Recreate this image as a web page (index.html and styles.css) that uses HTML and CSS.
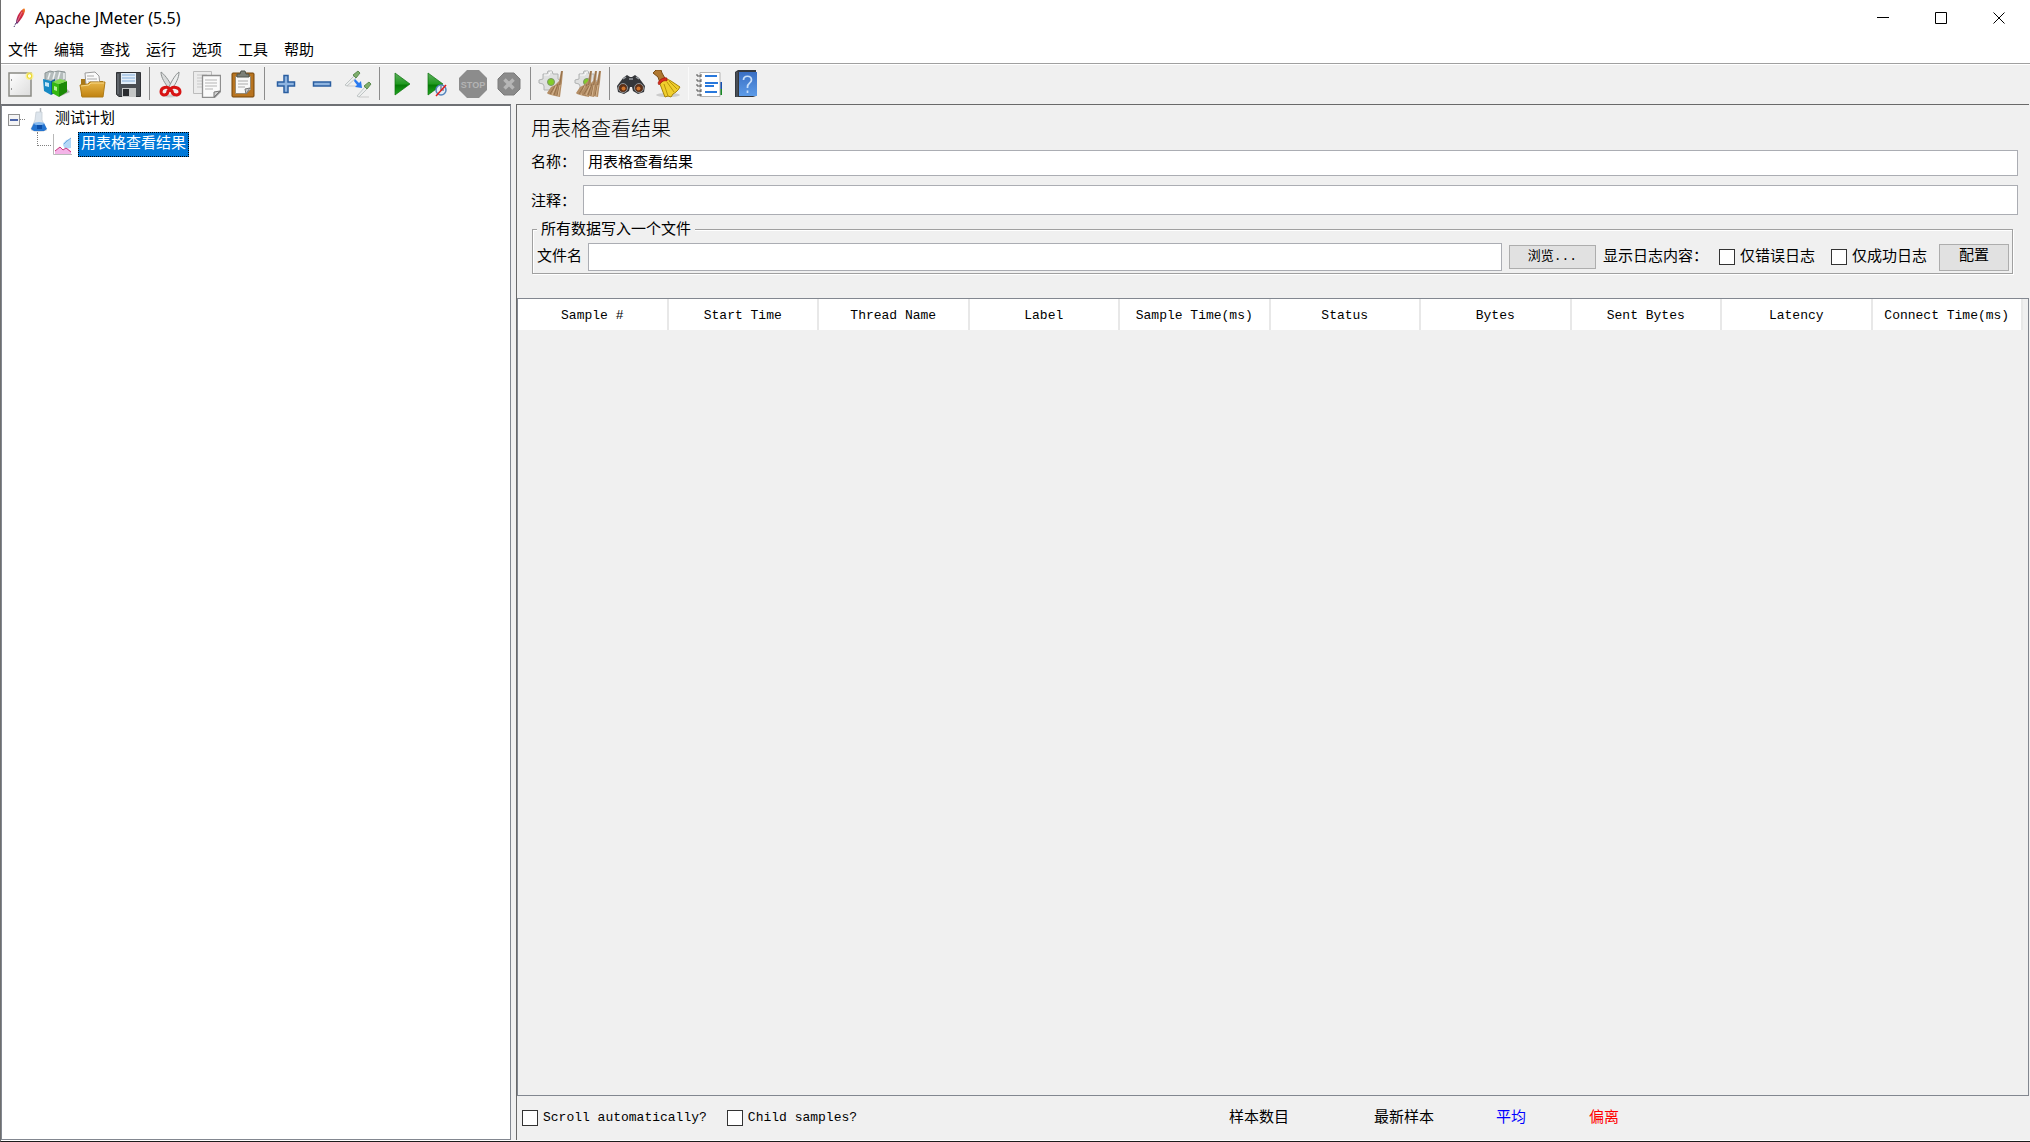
FILE: index.html
```html
<!DOCTYPE html>
<html lang="zh-CN">
<head>
<meta charset="utf-8">
<title>Apache JMeter (5.5)</title>
<link rel="stylesheet" href="styles.css">
</head>
<body>
<svg class="defs" aria-hidden="true">
  <defs>
    <linearGradient id="green" x1="0" y1="0" x2="0" y2="1"><stop offset="0" stop-color="#5fae5f"/><stop offset=".5" stop-color="#1f9a1f"/><stop offset=".55" stop-color="#067a06"/><stop offset="1" stop-color="#22a822"/></linearGradient>
    <linearGradient id="gold" x1="0" y1="0" x2="0" y2="1"><stop offset="0" stop-color="#e8b648"/><stop offset="1" stop-color="#c08210"/></linearGradient>
    <linearGradient id="paper" x1="0" y1="0" x2="1" y2="1"><stop offset="0" stop-color="#fff"/><stop offset="1" stop-color="#dcdcdc"/></linearGradient>
    <linearGradient id="book" x1="0" y1="0" x2="0" y2="1"><stop offset="0" stop-color="#3a6fc4"/><stop offset="1" stop-color="#5c9be8"/></linearGradient>
    <linearGradient id="feather" x1="0" y1="1" x2="1" y2="0"><stop offset="0" stop-color="#4a2a7c"/><stop offset=".35" stop-color="#c4204a"/><stop offset=".7" stop-color="#d8303a"/><stop offset="1" stop-color="#f69a20"/></linearGradient>
    <g id="gear">
      <path d="M5 4h4l1-3h4l1 3h5v5l3 2v3l-3 2v4H6v-4l-1-2-4-1v-3l4-1z" fill="#dfe0e0" stroke="#b0b2b2"/>
      <path d="M6 5h5l1-3h2" stroke="#fafafa" fill="none"/>
      <circle cx="13" cy="12" r="3.500" fill="#82cc2a" stroke="#7c9468"/>
    </g>
    <g id="brush">
      <path d="M25 1h-2l-2 10-4 4-4 2-4 6 1 1 3 1 4 1 5 1 1-8 1-7z" fill="#b48e66"/>
      <path d="M24 1l-2 12-3 13M20 14l-4 11M17 16l-5 8" stroke="#94704a" fill="none"/>
      <path d="M22 15l-2 11M18 16l-4 9" stroke="#d6b690" fill="none"/>
    </g>
  </defs>
</svg>

<header class="titlebar">
  <svg class="app-icon" viewBox="0 0 14 20"><path d="M10 1c2-1 2 0 2 2-1 4-4 9-8 13l-1-1C3 10 6 4 10 1z" fill="url(#feather)"/><path d="M3 15l-2 4" stroke="#4a3a6c" stroke-dasharray="2 1"/><path d="M9 4L4 14" stroke="#f2a0a0" stroke-width=".7"/></svg>
  <h1 class="app-title">Apache JMeter (5.5)</h1>
  <button class="win-button" aria-label="最小化"><svg viewBox="0 0 12 12"><path d="M0 5.500h12"/></svg></button>
  <button class="win-button" aria-label="最大化"><svg viewBox="0 0 12 12"><path d="M.5.500h11v11H.5z"/></svg></button>
  <button class="win-button" aria-label="关闭"><svg viewBox="0 0 12 12"><path d="M.5.500l11 11M11.500.500l-11 11"/></svg></button>
</header>

<nav class="menubar">
  <button>文件</button><button>编辑</button><button>查找</button><button>运行</button><button>选项</button><button>工具</button><button>帮助</button>
</nav>

<div class="toolbar" role="toolbar">
  <button aria-label="新建"><svg viewBox="0 0 28 28"><rect x="3" y="3" width="22" height="23" fill="url(#paper)" stroke="#8a8a84" stroke-width="1.500"/><path d="M5.500 9v2M5.500 18v2" stroke="#999"/><circle cx="23.500" cy="6" r="4" fill="#fff27a" opacity=".7"/><circle cx="23.500" cy="6" r="2.300" fill="#fffde0" stroke="#ecd81c"/></svg></button>
  <button aria-label="模板"><svg viewBox="0 0 28 28"><path d="M3 3l5-2 4 1 4-1 7 1v12H3z" fill="#b4bcbc" stroke="#8a9494"/><path d="M8 3l-2 6M13 2l-2 7M18 2l-2 7M22 3v6" stroke="#eef2f2" stroke-width="1.500"/><path d="M19 26l9-4-4-4z" fill="#000" opacity=".25"/><path d="M1 9l8 2v14l-7-4z" fill="#1689c4"/><path d="M9 11l4-2v14l-4 2z" fill="#0b5f96"/><path d="M3 12l4 1v4l-4-1z" fill="#c6e6f6"/><path d="M10 12l7 2v13l-7-4z" fill="#35b810"/><path d="M17 14l8-3v11l-8 5z" fill="#1c8a06"/><path d="M10 12l8-3 7 2-8 3z" fill="#7edc4c"/><path d="M12 16l3 1v4l-3-1z" fill="#b4f094"/></svg></button>
  <button aria-label="打开"><svg viewBox="0 0 28 28"><path d="M3 9h6l1 2h15v15H3z" fill="#a87818"/><path d="M7 3l10-1 4 4 1 9H8z" fill="#fafafa" stroke="#9a9a9a"/><path d="M9 6h7M9 9h10M10 12h10" stroke="#aaa"/><path d="M2 15l8-1 2-2h15l-2 15H4z" fill="url(#gold)" stroke="#b07c18"/><path d="M3 16l8-1 2-2h13" stroke="#f6d888" fill="none"/></svg></button>
  <button aria-label="保存"><svg viewBox="0 0 28 28"><path d="M2.500 2.500h24v24H5l-2.500-2z" fill="#494d52" stroke="#303236"/><path d="M7 3h15v11H7z" fill="#e4eef8"/><path d="M8 5h13M8 8h13M8 11h13" stroke="#a4c4e4" stroke-width="1.500"/><path d="M8 18h14v9H8z" fill="#c4c6c6"/><path d="M9 19h6v7H9z" fill="#292b2e"/><path d="M4 4v20" stroke="#777c82"/></svg></button>
  <span class="sep"></span>
  <button aria-label="剪切"><svg viewBox="0 0 28 28"><path d="M4 2c3 2 8 8 11 15l-3 2C8 13 4 8 4 2z" fill="#d8dada" stroke="#8c9090"/><path d="M22 2c-3 2-7 8-10 15l3 2c4-6 7-11 7-17z" fill="#eceeee" stroke="#8c9090"/><ellipse cx="13" cy="26" rx="8" ry="1.500" fill="#000" opacity=".15"/><path d="M12 19c-1-3-8-2-8 3 0 4 7 4 7-1l2-2 2 2c0 5 8 5 8 1 0-5-8-6-9-3z" fill="none" stroke="#d81414" stroke-width="3"/></svg></button>
  <button aria-label="复制"><svg viewBox="0 0 28 28"><path d="M.5 1.500h18v22H.5z" fill="#ececec" stroke="#bcbcbc"/><path d="M4 5h10M4 8h6M4 11h5M4 14h5M4 17h5" stroke="#c8c8c8"/><path d="M9.500 5.500h18v16l-6 6h-12z" fill="#fafafa" stroke="#8e8e8e" stroke-width="1.300"/><path d="M12 10h12M12 13h12M12 16h12M12 19h8" stroke="#b4b4b4"/><path d="M27 21l-6 1v5z" fill="#d2d2d2" stroke="#777"/></svg></button>
  <button aria-label="粘贴"><svg viewBox="0 0 28 28"><rect x="3" y="3" width="22" height="24" rx="1" fill="#b87420" stroke="#744408"/><path d="M6.500 6.500h15v13l-4 4h-11z" fill="#f8f8f8" stroke="#9a8a70"/><path d="M9 11h10M9 14h10M9 17h7" stroke="#aaa"/><path d="M21 18l-5 1 1 5z" fill="#c8c8c8" stroke="#777"/><path d="M8 7V4h3l1-3h4l1 3h3v3z" fill="#7c8078" stroke="#50544c"/></svg></button>
  <span class="sep"></span>
  <button aria-label="展开全部"><svg viewBox="0 0 28 28"><path d="M12 5.500h4V12h6.500v4H16v6.500h-4V16H5.500v-4H12z" fill="#8eb4e0" stroke="#2a5ea0" stroke-width="1.500"/></svg></button>
  <button aria-label="折叠全部"><svg viewBox="0 0 28 28"><rect x="5.500" y="12" width="17" height="4" fill="#8eb4e0" stroke="#2a5ea0" stroke-width="1.500"/></svg></button>
  <button aria-label="切换"><svg viewBox="0 0 28 28"><path d="M3 16h11M15 27h10" stroke="#000" opacity=".15"/><path d="M1 15l9-9 2 2-9 8z" fill="#eceeee" stroke="#b4baba" stroke-width=".8"/><path d="M9 5l3 3 4-5-2-2z" fill="#7eae6c" stroke="#5c8c50"/><path d="M13 26l8-9 2 2-8 8z" fill="#eceeee" stroke="#b4baba" stroke-width=".8"/><path d="M20 16l3 3 4-5-2-2z" fill="#7eae6c" stroke="#5c8c50"/><path d="M11 9l4 4 2-2 1 7-7-1 2-2-3-4z" fill="#2a7af0"/></svg></button>
  <span class="sep"></span>
  <button aria-label="启动"><svg viewBox="0 0 28 28"><path d="M8 3l15 11L8 25z" fill="url(#green)" stroke="#0c720c" stroke-width=".7"/></svg></button>
  <button aria-label="不停顿开始"><svg viewBox="0 0 28 28"><path d="M5 3l15 11L5 25z" fill="url(#green)" stroke="#0c720c" stroke-width=".7"/><circle cx="18" cy="20" r="5" fill="#e4ecf6" stroke="#5484bc" stroke-width="1.500"/><path d="M18 20v-4M18 20h3" stroke="#456"/><path d="M13 26l10-11" stroke="#e01c1c" stroke-width="1.500"/></svg></button>
  <button aria-label="停止" disabled><svg viewBox="0 0 28 28"><path d="M8 0h12l8 8v12l-8 8H8l-8-8V8z" fill="#8c8c8c"/><text x="14" y="18" class="stop-label">STOP</text></svg></button>
  <button aria-label="关闭" disabled><svg viewBox="0 0 28 28"><path d="M9 3h10l6 6v10l-6 6H9l-6-6V9z" fill="#8a8a8a" stroke="#7c7c7c"/><path d="M9.500 9.500l9 9M18.500 9.500l-9 9" stroke="#b6b6b6" stroke-width="3.500"/></svg></button>
  <span class="sep"></span>
  <button aria-label="清除"><svg viewBox="0 0 28 28"><use href="#gear"/><use href="#brush"/></svg></button>
  <button aria-label="清除全部"><svg viewBox="0 0 28 28"><use href="#gear"/><use href="#brush" x="-7"/><use href="#brush" x="2"/><use href="#brush" x="-2"/></svg></button>
  <span class="sep"></span>
  <button aria-label="查找"><svg viewBox="0 0 28 28"><path d="M6 8l4-3 3 2h2l3-2 4 3 6 8-1 6-6 2-5-3-1-4h-2l-1 4-5 3-6-2-1-6z" fill="#34363a"/><path d="M6 9l3-2M19 7l3 2M12 9h4" stroke="#9a9ea4" stroke-width="1.500"/><circle cx="6" cy="18" r="4.500" fill="#5c3018" stroke="#909498"/><circle cx="22" cy="18" r="4.500" fill="#5c3018" stroke="#909498"/><circle cx="6.500" cy="18.500" r="2" fill="#d0742c"/><circle cx="21.500" cy="18.500" r="2" fill="#d0742c"/></svg></button>
  <button aria-label="重置搜索"><svg viewBox="0 0 28 28"><ellipse cx="15" cy="25" rx="12" ry="2" fill="#000" opacity=".15"/><path d="M0 3l3-3 5 0 1 3 4 7-6 3-2-6z" fill="#b07830" stroke="#7a4c14"/><path d="M12 8l6 3 9 6-2 3-2 2-3 2-2 3-3-1-3 1-2-5-3-8z" fill="#f0ce2c" stroke="#a88408"/><path d="M14 12l7 10M11 14l4 12M16 11l8 8" stroke="#b8940c" fill="none"/><path d="M5 13c1-3 5-6 9-5v3c-3-1-6 1-8 4z" fill="#d82c1c" stroke="#981408" stroke-width=".6"/></svg></button>
  <span class="sep faint"></span>
  <button aria-label="函数助手"><svg viewBox="0 0 28 28"><path d="M22 12h4v7h-4z" fill="#1450b0"/><path d="M22 19h4v6h-4z" fill="#168a24"/><path d="M4 2.500h20v24H4z" fill="#fff" stroke="#b4b4b4"/><path d="M9 6h12" stroke="#2878dc" stroke-width="2"/><path d="M9 13h13M9 16h9M9 22h12" stroke="#2878dc" stroke-width="2"/><path d="M1 6h4M1 11h4M1 16h4M1 21h4M1 25h4" stroke="#505050"/><path d="M1 4v2M1 9v2M1 14v2M1 19v2M5 4v3M5 9v3M5 14v3M5 19v3M5 24v2" stroke="#555"/></svg></button>
  <button aria-label="帮助"><svg viewBox="0 0 28 28"><path d="M3 2l3-2h18v26l-3 1H3z" fill="#34383e"/><path d="M7 2h18v24H7z" fill="url(#book)"/><path d="M5 2v25" stroke="#5c646e"/><path d="M11.500 10c0-5 8-5 8 0 0 3-4 3-4 7v1M15.500 20.500v2.500" fill="none" stroke="#c8dffa" stroke-width="1.700"/></svg></button>
</div>

<main class="workspace">
  <nav class="tree" aria-label="测试计划">
    <div class="tree-row">
      <button class="expander" aria-label="折叠"></button><span class="dots"></span>
      <svg class="plan-icon" viewBox="0 0 18 24"><ellipse cx="9" cy="22" rx="8" ry="1.500" fill="#000" opacity=".2"/><path d="M10.500 0v6" stroke="#b0b6bc" stroke-width="1.500"/><path d="M6 4h6v8l4 9-2 2H4l-3-2 4-9z" fill="#dce4ec" stroke="#c6ced6" stroke-width=".8"/><path d="M4 15h10l3 6-3 2H4l-3-2z" fill="#2474d0"/><ellipse cx="9" cy="15.500" rx="5" ry="1.500" fill="#84b8ee"/><path d="M7 17h5v4H7z" fill="#0c4ea8"/></svg>
      <span class="node">测试计划</span>
    </div>
    <div class="tree-row child">
      <span class="elbow"></span>
      <svg class="graph-icon" viewBox="0 0 20 22"><path d="M1.500 0v20.500H20" stroke="#b8b8b8" fill="none"/><path d="M11 11c0-3 2-3 3-5l5-1v9l-6 1z" fill="#b4d8f6"/><path d="M3 17l5-4 3 3 4-2 4 3v3H3z" fill="#f4b4e8"/><path d="M3 17l5-4 3 3 3-2 5 4" stroke="#c8387c" fill="none"/><path d="M12 10l3-3 4-3" stroke="#6ea8e0" fill="none"/></svg>
      <span class="node selected">用表格查看结果</span>
    </div>
  </nav>

  <section class="panel">
    <div class="form">
      <h2 class="panel-title">用表格查看结果</h2>
      <div class="field name"><label for="name">名称：</label><input id="name" type="text" value="用表格查看结果"></div>
      <div class="field comment"><label for="comment">注释：</label><input id="comment" type="text"></div>
      <fieldset class="file-group">
        <legend>所有数据写入一个文件</legend>
        <div class="file-row">
          <label for="file">文件名</label><input id="file" type="text">
          <button class="push browse">浏览...</button>
          <span class="log-label">显示日志内容：</span>
          <label class="check"><input type="checkbox"><span>仅错误日志</span></label>
          <label class="check"><input type="checkbox"><span>仅成功日志</span></label>
          <button class="push config">配置</button>
        </div>
      </fieldset>
    </div>

    <div class="results">
      <table>
        <thead><tr><th>Sample #</th><th>Start Time</th><th>Thread Name</th><th>Label</th><th>Sample Time(ms)</th><th>Status</th><th>Bytes</th><th>Sent Bytes</th><th>Latency</th><th>Connect Time(ms)</th></tr></thead>
      </table>
    </div>

    <footer class="summary">
      <label class="check"><input type="checkbox">Scroll automatically?</label>
      <label class="check"><input type="checkbox">Child samples?</label>
      <div class="stats">
        <span class="count">样本数目</span>
        <span class="latest">最新样本</span>
        <span class="average">平均</span>
        <span class="deviation">偏离</span>
      </div>
    </footer>
  </section>
</main>
</body>
</html>
```

FILE: styles.css
```css
* { box-sizing: border-box; }

body {
  margin: 0;
  min-height: 100vh;
  display: flex;
  flex-direction: column;
  background: #fff;
  border-left: 1px solid #6e6e6e;
  border-bottom: 1px solid #1c1c1c;
  color: #000;
  font: 15px/18px "Liberation Mono", "Noto Sans CJK SC", monospace;
}

button, input { font: inherit; color: inherit; }
button { padding: 0; border: 0; background: none; }
.defs { position: absolute; width: 0; height: 0; }

/* Title bar */
.titlebar { display: flex; align-items: center; height: 36px; padding: 0 2px 0 12px; }
.app-icon { width: 14px; height: 20px; margin-right: 8px; fill: none; }
.app-title { flex: 1; margin: 0; font: 400 16px/20px "Noto Sans", sans-serif; }
.win-button { display: flex; align-items: center; justify-content: center; width: 58px; height: 36px; }
.win-button svg { width: 12px; height: 12px; fill: none; stroke: #000; }

/* Menu bar */
.menubar { display: flex; height: 28px; border-bottom: 1px solid #a0a0a0; }
.menubar button { padding: 0 8px 2px; font-family: "Noto Sans CJK SC", sans-serif; }
.menubar button:first-child { padding-left: 7px; }

/* Toolbar */
.toolbar {
  display: flex;
  align-items: center;
  height: 40px;
  padding: 0 0 2px 1px;
  background: #f0f0f0;
  border-top: 1px solid #fff;
}
.toolbar button { display: flex; justify-content: center; width: 36px; }
.toolbar svg { width: 28px; height: 28px; }
.sep { width: 1px; height: 33px; margin: 0 3px; background: #8c8c8c; }
.sep.faint { background: #fafafa; }
.stop-label { font: 700 9px "Liberation Sans", sans-serif; fill: #b4b4b4; text-anchor: middle; }

/* Workspace */
.workspace { flex: 1; display: flex; background: #f0f0f0; border-bottom: 1px solid #fff; }

.tree {
  width: 510px;
  flex: none;
  padding: 1px 0 0 6px;
  background: #fff;
  border: 1px solid #828790;
  border-top: 2px solid #6e7074;
}
.tree-row { display: flex; align-items: center; height: 25px; }
.expander {
  width: 12px;
  height: 12px;
  border: 1px solid #919191;
  background: linear-gradient(#4b63a7, #4b63a7) center / 8px 2px no-repeat #f4f4f4;
}
.dots { width: 5px; border-top: 1px dotted #808080; }
.plan-icon { width: 18px; height: 24px; margin: 0 7px 0 5px; }
.child { padding-left: 29px; }
.elbow { align-self: flex-start; width: 14px; height: 14px; border-left: 1px dotted #808080; border-bottom: 1px dotted #808080; }
.graph-icon { width: 20px; height: 22px; margin: 0 6px 0 1px; }
.selected {
  height: 25px;
  padding: 3px 2px 1px;
  background: #0078d7;
  border: 1px dotted #ff8728;
  outline: 1px dotted #000;
  outline-offset: -1px;
  color: #fff;
}

.panel {
  flex: 1;
  min-width: 0;
  display: flex;
  flex-direction: column;
  margin: 0 1px 0 5px;
  border-left: 1px solid #696969;
  border-top: 1px solid #696969;
}
.form { padding: 14px 11px 0 14px; }
.panel-title { margin: 0 0 7px; font-size: 20px; line-height: 24px; font-weight: 300; }

.form input[type="text"] {
  flex: 1;
  min-width: 0;
  padding: 2px 4px 0;
  border: 1px solid #abadb3;
  background: #fff;
}
.field { display: flex; align-items: center; }
.field label { width: 52px; padding-top: 2px; }
.name { height: 26px; margin-bottom: 9px; }
.comment { height: 30px; }
.comment label { padding-top: 5px; }
.field input { align-self: stretch; }

.file-group {
  min-width: 0;
  margin: 3px 5px 0 1px;
  padding: 3px 3px 2px 4px;
  border: 1px solid #a0a0a0;
  box-shadow: 1px 1px 0 #fff, inset 1px 1px 0 #fff;
}
.file-group legend { padding: 4px 4px 0; background: #f0f0f0; }
.file-row { display: flex; align-items: center; height: 28px; }
.file-row > label, .file-row span { padding-top: 1px; }
.file-row input[type="text"] { height: 28px; margin: 0 7px 0 6px; }
.push { border: 1px solid #adadad; background: #e1e1e1; }
.browse { width: 87px; height: 24px; margin-right: 7px; font-size: 13px; }
.config { width: 70px; height: 27px; }
.log-label { margin-right: 11px; }
.file-row .check { margin-right: 12px; padding-top: 0; }

.check { display: flex; align-items: center; gap: 5px; white-space: nowrap; }
.check + .check { margin-left: 4px; }
.check input {
  appearance: none;
  width: 16px;
  height: 16px;
  margin: 0;
  border: 1px solid #333;
  background: #fff;
}

/* Results table */
.results { flex: 1; margin-top: 24px; padding-right: 5px; border: 1px solid #828790; }
.results table { width: 100%; table-layout: fixed; border-collapse: separate; border-spacing: 0; }
.results th {
  height: 31px;
  padding: 2px 0 0;
  background: #fff;
  border-right: 2px solid #e8e8e8;
  font-size: 13px;
  font-weight: 400;
  white-space: nowrap;
}

/* Summary line */
.summary { display: flex; align-items: center; height: 44px; padding-left: 5px; font-size: 13px; }
.summary .check { margin-right: 16px; }
.stats { flex: 1; display: flex; justify-content: center; padding: 1px 18px 0 0; font-size: 15px; }
.count { width: 145px; }
.latest { width: 122px; }
.average { width: 93px; color: #00f; }
.deviation { width: 66px; color: #f00; }
```
